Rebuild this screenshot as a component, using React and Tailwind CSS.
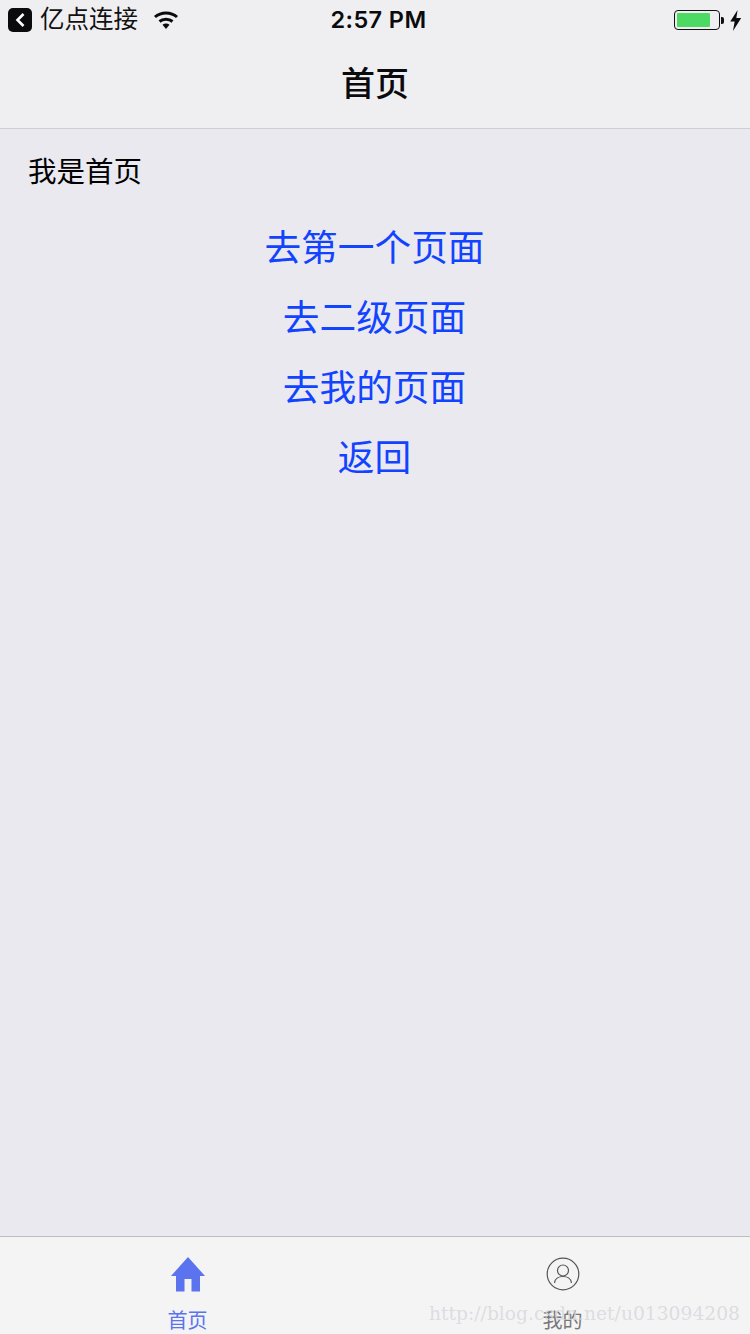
const cjk = "font-['Liberation_Sans','Noto_Sans_CJK_SC',sans-serif]";

function StatusBar() {
  return (
    <div className="flex items-center h-10 pl-2 pr-[9px] relative">
      <div className="w-6 h-6 rounded-[5px] bg-[#0b0b0d] flex items-center justify-center">
        <svg width="12" height="16" viewBox="0 0 12 16" fill="none" stroke="#fff" strokeWidth="2.6">
          <path d="M9.5 2 L3.5 8 L9.5 14" />
        </svg>
      </div>
      <span className="ml-2 text-[24.5px] leading-none text-[#111]">亿点连接</span>
      <svg className="ml-[15px]" width="26" height="20" viewBox="0 0 26 20" fill="none" stroke="#0b0b0d" strokeWidth="3">
        <path d="M2 7 C8 1.5 18 1.5 24 7" />
        <path d="M6.5 11.5 C10 8.5 16 8.5 19.5 11.5" />
        <path d="M9.5 14.8 L13 19 L16.5 14.8 C14.5 13 11.5 13 9.5 14.8Z" fill="#0b0b0d" stroke="none" />
      </svg>
      <span className="absolute left-[7px] right-0 text-center text-[23.5px] font-semibold tracking-[0.4px] text-[#0b0b0d] font-['Inter',sans-serif]">
        2:57 PM
      </span>
      <div className="ml-auto flex items-center">
        <div className="w-[46px] h-[20px] rounded-[4px] border-[1.5px] border-[#111] p-[2px] flex">
          <div className="w-[33px] h-full bg-[#4cd964] rounded-[1px]" />
        </div>
        <div className="w-[3px] h-[7px] bg-[#111] rounded-r-[2px] ml-[1px]" />
        <svg className="ml-[5px] mr-[-1px]" width="13" height="21" viewBox="0 0 12 20" fill="#0b0b0d">
          <path d="M8 0 L1 11 L5.2 11 L3.6 20 L11.4 7.6 L6.8 7.6 Z" />
        </svg>
      </div>
    </div>
  );
}

function TabBar() {
  return (
    <div className="h-[98px] bg-[#f4f4f4] border-t border-[#bdbdc0] flex relative overflow-hidden">
      <div className="flex-1 flex flex-col items-center pt-[19px] text-[#5b73ee]">
        <svg className="shrink-0" width="36" height="36" viewBox="0 0 36 36" fill="#5b73ee">
          <path d="M18 1 L35 20 L30 20 L30 35.5 L21.5 35.5 L21.5 23 L14.5 23 L14.5 35.5 L6 35.5 L6 20 L1 20 Z" />
        </svg>
        <span className="mt-[15px] shrink-0 text-[20px] leading-[28px]">首页</span>
      </div>
      <div className="flex-1 flex flex-col items-center pt-[20px] text-[#777]">
        <svg className="shrink-0" width="34" height="34" viewBox="0 0 34 34" fill="none" stroke="#555" strokeWidth="1.2">
          <circle cx="17" cy="17" r="15.8" />
          <circle cx="17" cy="13.5" r="5.5" />
          <path d="M8.5 26 C9 21.5 13 19.5 17 19.5 C21 19.5 25 21.5 25.5 26" />
        </svg>
        <span className="mt-[16px] shrink-0 text-[20px] leading-[28px]">我的</span>
      </div>
      <span className="absolute left-[429px] top-[65px] text-[18.7px] leading-[24px] text-[#d6d6dc]/80 font-['DejaVu_Serif',serif]">
        http://blog.csdn.net/u013094208
      </span>
    </div>
  );
}

export default function App() {
  return (
    <div className={`w-[750px] h-[1334px] flex flex-col bg-[#e9e9ef] overflow-hidden ${cjk}`}>
      <div className="bg-[#efeff2] border-b border-[#cfcfd3]">
        <StatusBar />
        <div className="h-[88px] flex items-center justify-center text-[34px] font-medium text-[#0b0b0d]">
          首页
        </div>
      </div>
      <div className="flex-1">
        <p className="pl-[28px] pt-[25px] text-[28.5px] leading-[36px] text-black">我是首页</p>
        <div className="mt-[24px] pr-[1px] flex flex-col items-center text-[36.7px] leading-[70px] text-[#1243ff]">
          <span>去第一个页面</span>
          <span>去二级页面</span>
          <span>去我的页面</span>
          <span>返回</span>
        </div>
      </div>
      <TabBar />
    </div>
  );
}
